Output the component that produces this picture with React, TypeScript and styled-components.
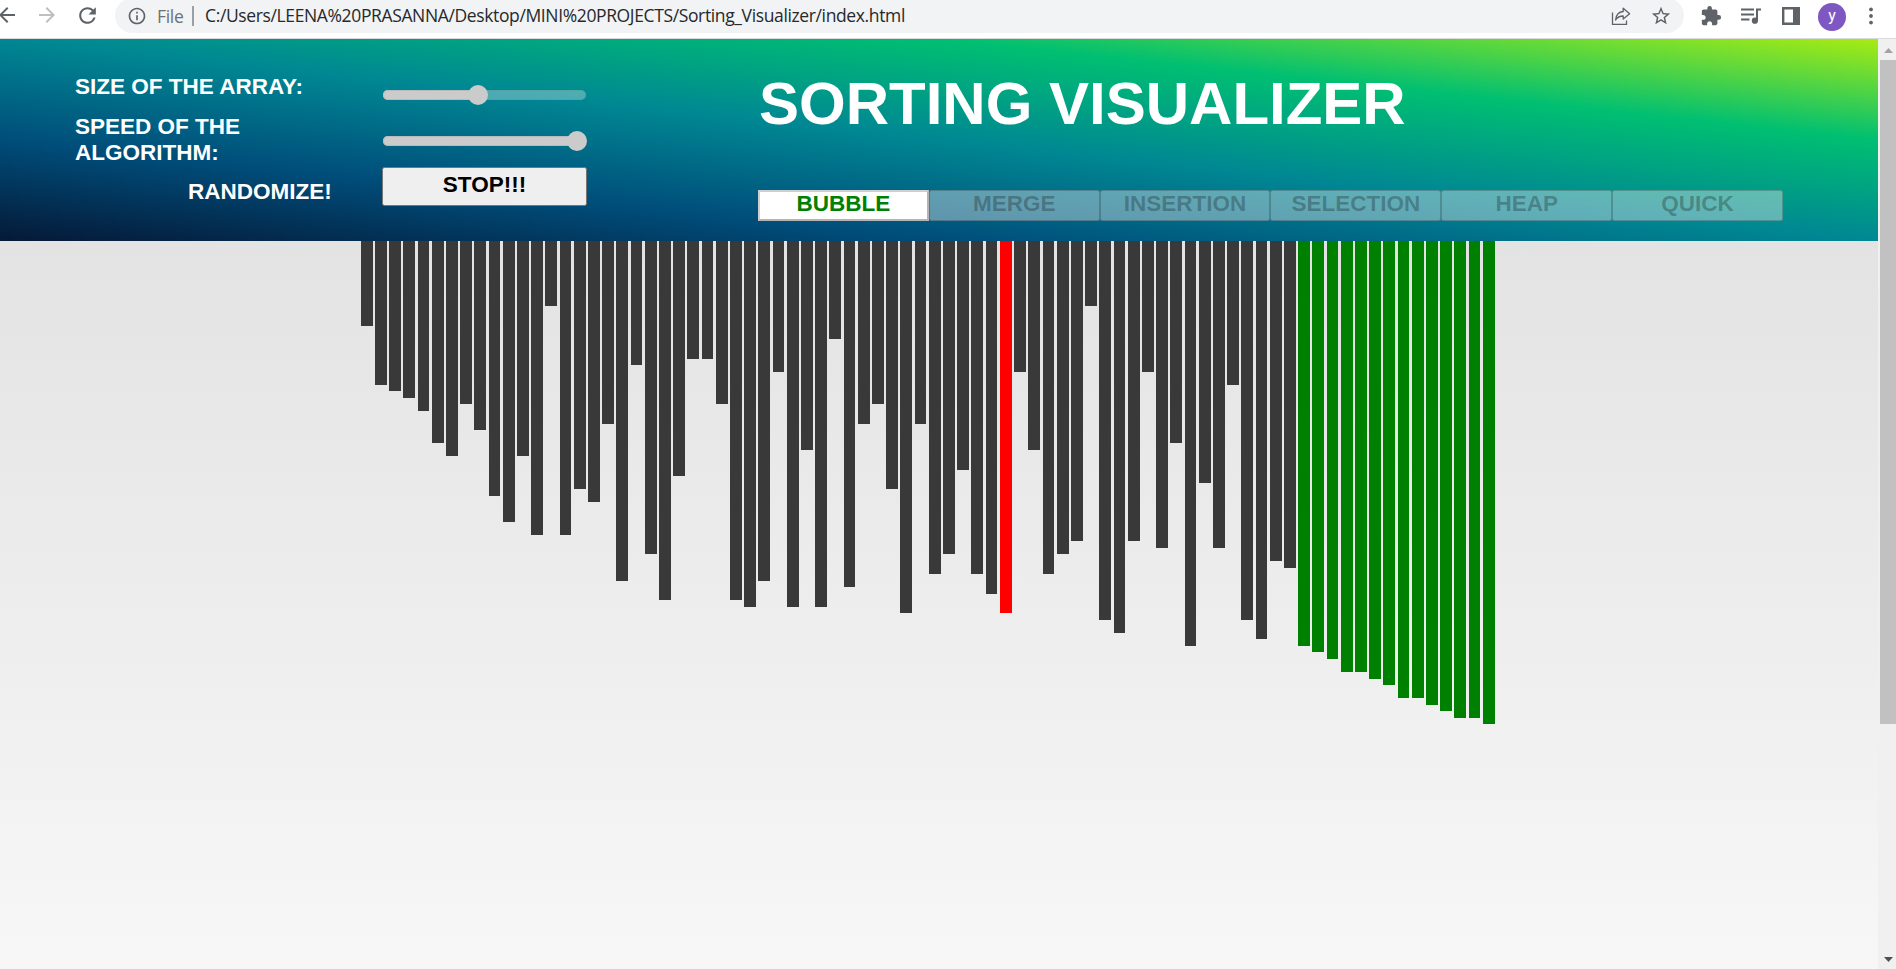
import React from "react";
import styled, { createGlobalStyle } from "styled-components";
import { MdArrowBack, MdArrowForward, MdRefresh, MdInfoOutline, MdStarBorder, MdExtension } from "react-icons/md";

const GlobalStyle = createGlobalStyle`
  * { box-sizing: border-box; }
  body { margin: 0; overflow: hidden; }
`;

const Window = styled.div`
  width: 1896px;
  height: 969px;
  display: flex;
  flex-direction: column;
  overflow: hidden;
  background: #fff;
  font-family: "Liberation Sans", Arial, sans-serif;
`;

const Toolbar = styled.div`
  height: 39px;
  flex: none;
  display: flex;
  align-items: flex-start;
  border-bottom: 1px solid #d9dadc;
  color: #5f6368;
  svg { display: block; flex: none; }
`;

const NavButtons = styled.div`
  width: 115px;
  height: 30px;
  flex: none;
  display: flex;
  align-items: center;
  gap: 16px;
  svg:first-child { margin-left: -5px; }
  svg:nth-child(2) { color: #bdbfc1; }
`;

const AddressBar = styled.div`
  width: 1569px;
  height: 35px;
  margin-top: -2px;
  padding: 0 12px 0 12px;
  flex: none;
  display: flex;
  align-items: center;
  border-radius: 18px;
  background: #f1f3f4;
  font-family: "Open Sans", "Noto Sans", sans-serif;
  font-size: 17.5px;
  line-height: 24px;
`;

const Scheme = styled.span`
  margin-left: 10px;
  width: 35px;
  letter-spacing: -0.3px;
  color: #6d7175;
`;

const Divider = styled.span`
  width: 2px;
  height: 20px;
  margin-right: 11px;
  background: #9aa0a6;
`;

const Url = styled.span`
  flex: 1;
  margin-top: -1px;
  letter-spacing: -0.37px;
  white-space: nowrap;
  color: #27292c;
`;

const BarActions = styled.div`
  display: flex;
  align-items: center;
  gap: 19px;
`;

const Extensions = styled.div`
  flex: 1;
  height: 31px;
  padding-left: 16px;
  display: flex;
  align-items: center;
  svg:nth-child(2) { margin: 0 21px 0 19px; }
`;

const Avatar = styled.div`
  width: 28px;
  height: 28px;
  margin: 2px 23px 0 18px;
  flex: none;
  border-radius: 50%;
  background: #7e57c2;
  color: #fff;
  font: 16px/25px Roboto, sans-serif;
  text-align: center;
`;

const Viewport = styled.div`
  flex: 1;
  min-height: 0;
  display: flex;
`;

const Page = styled.main`
  width: 1878px;
  background: linear-gradient(#e3e3e3 202px, #f7f7f7);
`;

const Header = styled.header`
  height: 202px;
  display: flex;
  background: linear-gradient(to right top, #051937, #004d7a, #008793, #00bf72, #a8eb12);
  color: #fff;
  font-weight: bold;
  font-size: 22.5px;
  line-height: 26px;
`;

const Labels = styled.div`
  width: 382px;
  padding: 35px 0 0 75px;
`;

const Label = styled.div<{ $indent?: number; $top?: number }>`
  width: 260px;
  margin-top: ${(p) => p.$top ?? 0}px;
  padding-left: ${(p) => p.$indent ?? 0}px;
`;

const Controls = styled.div`
  width: 205px;
  padding-top: 46px;
`;

const Slider = styled.div`
  height: 20px;
  margin-bottom: 26px;
  padding: 0 1px;
  display: flex;
  align-items: center;
`;

const Track = styled.div`
  height: 10px;
  flex: 1;
  display: flex;
  align-items: center;
  border-radius: 5px;
  background: rgba(255, 255, 255, 0.3);
  box-shadow: inset 0 0 0 1px rgba(110, 130, 130, 0.25);
`;

const Fill = styled.div<{ $width: number }>`
  width: ${(p) => p.$width}px;
  height: 10px;
  border-radius: 5px 0 0 5px;
  background: #cbcbcb;
  box-shadow: inset 0 0 0 1px #b9bcbd;
`;

const Thumb = styled.div`
  width: 20px;
  height: 20px;
  margin: 0 -1px 0 -9px;
  flex: none;
  border-radius: 50%;
  background: #cbcbcb;
`;

const StopButton = styled.button`
  display: block;
  width: 205px;
  height: 39px;
  margin-top: -10px;
  padding: 0 0 4px;
  border: 1px solid #767676;
  border-radius: 2.5px;
  background: #efefef;
  color: #000;
  font: bold 22.5px/26px "Liberation Sans", Arial, sans-serif;
`;

const Main = styled.div`
  margin-left: 171px;
`;

const Title = styled.h1`
  margin: 30px 0 52px;
  padding-left: 1px;
  font-size: 60px;
  line-height: 69px;
`;

const Algorithms = styled.div`
  width: 1025px;
  display: grid;
  grid-template-columns: repeat(6, 1fr);
`;

const AlgorithmButton = styled.button<{ $active?: boolean }>`
  height: 31px;
  padding: 0 0 ${(p) => (p.$active ? 6 : 4)}px;
  border-style: solid;
  border-width: ${(p) => (p.$active ? 2 : 1)}px;
  border-color: ${(p) => (p.$active ? "#cfcfcf #b4b4b4 #b4b4b4 #cfcfcf" : "rgba(16, 16, 16, 0.22)")};
  border-radius: ${(p) => (p.$active ? 0 : 2.5)}px;
  background: ${(p) => (p.$active ? "#fff" : "rgba(239, 239, 239, 0.4)")};
  color: ${(p) => (p.$active ? "#008000" : "rgba(16, 16, 16, 0.3)")};
  font: bold 22.5px/24px "Liberation Sans", Arial, sans-serif;
`;

const Chart = styled.section`
  display: flex;
  align-items: flex-start;
  gap: 2.40625px;
  padding-left: 360.75px;
`;

const barColors = { idle: "#393939", compare: "#ff0000", sorted: "#008000" };

const Bar = styled.div<{ $state: keyof typeof barColors }>`
  width: 11.796875px;
  flex: none;
  background: ${(p) => barColors[p.$state]};
`;

const Scrollbar = styled.div`
  width: 18px;
  display: flex;
  flex-direction: column;
  align-items: flex-end;
  background: #f0f0f0;
  svg { display: block; }
`;

const ScrollThumb = styled.div`
  width: 16px;
  height: 664px;
  margin-bottom: auto;
  background: #c1c1c1;
`;

const UNIT = 6.53;
const COMPARE_INDEX = 45;
const SORTED_FROM = 66;
const values = [
  13, 22, 23, 24, 26, 31, 33, 25, 29, 39, 43, 33, 45, 10, 45, 38, 40, 28, 52, 19,
  48, 55, 36, 18, 18, 25, 55, 56, 52, 20, 56, 32, 56, 15, 53, 28, 25, 38, 57, 28,
  51, 48, 35, 51, 54, 57, 20, 32, 51, 48, 46, 10, 58, 60, 46, 20, 47, 31, 62, 37,
  47, 22, 58, 61, 49, 50, 62, 63, 64, 66, 66, 67, 68, 70, 70, 71, 72, 73, 73, 74,
];

const algorithms = ["BUBBLE", "MERGE", "INSERTION", "SELECTION", "HEAP", "QUICK"];

const stateOf = (i: number): keyof typeof barColors =>
  i >= SORTED_FROM ? "sorted" : i === COMPARE_INDEX ? "compare" : "idle";

const ShareIcon = () => (
  <svg width="20" height="20" viewBox="0 0 20 20" fill="none" stroke="currentColor" strokeWidth="1.3">
    <path d="M1.5 6.5V18.3H15.5V14.5" />
    <path d="M12.2 2.2L18.6 7.8L12.2 13V10C8.5 10 6.3 11.2 4.6 14C5 9 7.5 6 12.2 5.5Z" strokeLinejoin="round" />
  </svg>
);

const PlaylistIcon = () => (
  <svg width="20" height="18" viewBox="0 0 20 18" fill="none" stroke="currentColor" strokeWidth="2">
    <path d="M0 2.5H13M0 7.5H13M0 12.5H8.5" />
    <path d="M16 14V2.5H20" />
    <circle cx="13.9" cy="13.7" r="2.1" fill="currentColor" />
  </svg>
);

const SidePanelIcon = () => (
  <svg width="18" height="18" viewBox="0 0 18 18">
    <path fill="currentColor" fillRule="evenodd" d="M0 0H18V18H0ZM2.4 2.4V15.6H11V2.4Z" />
  </svg>
);

const MenuIcon = () => (
  <svg width="4" height="18" viewBox="0 0 4 18" fill="currentColor">
    <circle cx="2" cy="2.4" r="1.9" />
    <circle cx="2" cy="9" r="1.9" />
    <circle cx="2" cy="15.6" r="1.9" />
  </svg>
);

export default function App() {
  return (
    <Window>
      <GlobalStyle />
      <Toolbar>
        <NavButtons>
          <MdArrowBack size={24} />
          <MdArrowForward size={24} />
          <MdRefresh size={25} />
        </NavButtons>
        <AddressBar>
          <MdInfoOutline size={20} />
          <Scheme>File</Scheme>
          <Divider />
          <Url>C:/Users/LEENA%20PRASANNA/Desktop/MINI%20PROJECTS/Sorting_Visualizer/index.html</Url>
          <BarActions>
            <ShareIcon />
            <MdStarBorder size={22} />
          </BarActions>
        </AddressBar>
        <Extensions>
          <MdExtension size={22} />
          <PlaylistIcon />
          <SidePanelIcon />
          <Avatar>y</Avatar>
          <MenuIcon />
        </Extensions>
      </Toolbar>
      <Viewport>
        <Page>
          <Header>
            <Labels>
              <Label>SIZE OF THE ARRAY:</Label>
              <Label $top={14}>SPEED OF THE ALGORITHM:</Label>
              <Label $top={13} $indent={113}>RANDOMIZE!</Label>
            </Labels>
            <Controls>
              <Slider>
                <Track>
                  <Fill $width={94} />
                  <Thumb />
                </Track>
              </Slider>
              <Slider>
                <Track>
                  <Fill $width={193} />
                  <Thumb />
                </Track>
              </Slider>
              <StopButton>STOP!!!</StopButton>
            </Controls>
            <Main>
              <Title>SORTING VISUALIZER</Title>
              <Algorithms>
                {algorithms.map((name, i) => (
                  <AlgorithmButton key={name} $active={i === 0}>
                    {name}
                  </AlgorithmButton>
                ))}
              </Algorithms>
            </Main>
          </Header>
          <Chart>
            {values.map((v, i) => (
              <Bar key={i} $state={stateOf(i)} style={{ height: v * UNIT }} />
            ))}
          </Chart>
        </Page>
        <Scrollbar>
          <svg width="16" height="21" viewBox="0 0 16 21"><path d="M4 14L8.5 9L13 14Z" fill="#a3a3a3" /></svg>
          <ScrollThumb />
          <svg width="16" height="21" viewBox="0 0 16 21"><path d="M4 9L8.5 14L13 9Z" fill="#505050" /></svg>
        </Scrollbar>
      </Viewport>
    </Window>
  );
}
